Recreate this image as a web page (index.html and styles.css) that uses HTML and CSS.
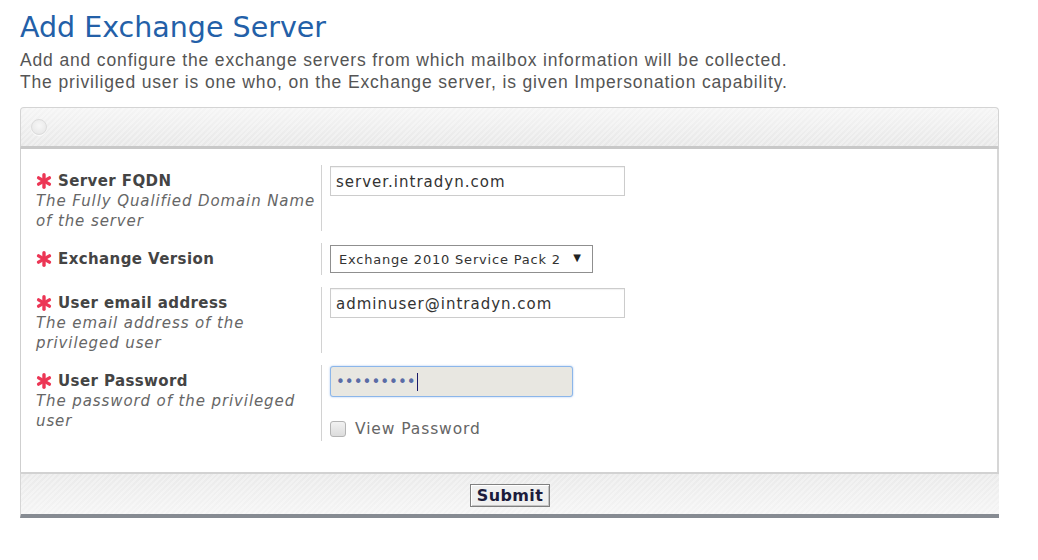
FILE: index.html
```html
<!DOCTYPE html>
<html>
<head>
<meta charset="utf-8">
<link rel="stylesheet" href="styles.css">
</head>
<body>
<div class="page">
  <h1 class="title">Add Exchange Server</h1>
  <p class="intro">Add and configure the exchange servers from which mailbox information will be collected.<br>The priviliged user is one who, on the Exchange server, is given Impersonation capability.</p>

  <div class="panel">
    <div class="panel-head"><span class="dot"></span></div>
    <div class="panel-body">
      <div class="row">
        <div class="label-cell">
          <div class="label"><svg class="req" viewBox="0 0 16 16"><g stroke="#ec3655" stroke-width="3.4" stroke-linecap="round"><line x1="8" y1="1.8" x2="8" y2="14.2"/><line x1="2.6" y1="4.9" x2="13.4" y2="11.1"/><line x1="2.6" y1="11.1" x2="13.4" y2="4.9"/></g></svg>Server FQDN</div>
          <div class="desc">The Fully Qualified Domain Name of the server</div>
        </div>
        <div class="field-cell">
          <input class="text" type="text" value="server.intradyn.com">
        </div>
      </div>

      <div class="row">
        <div class="label-cell">
          <div class="label"><svg class="req" viewBox="0 0 16 16"><g stroke="#ec3655" stroke-width="3.4" stroke-linecap="round"><line x1="8" y1="1.8" x2="8" y2="14.2"/><line x1="2.6" y1="4.9" x2="13.4" y2="11.1"/><line x1="2.6" y1="11.1" x2="13.4" y2="4.9"/></g></svg>Exchange Version</div>
        </div>
        <div class="field-cell">
          <span class="select-wrap">
            <select class="select"><option>Exchange 2010 Service Pack 2</option></select>
          </span>
        </div>
      </div>

      <div class="row">
        <div class="label-cell">
          <div class="label"><svg class="req" viewBox="0 0 16 16"><g stroke="#ec3655" stroke-width="3.4" stroke-linecap="round"><line x1="8" y1="1.8" x2="8" y2="14.2"/><line x1="2.6" y1="4.9" x2="13.4" y2="11.1"/><line x1="2.6" y1="11.1" x2="13.4" y2="4.9"/></g></svg>User email address</div>
          <div class="desc">The email address of the privileged user</div>
        </div>
        <div class="field-cell">
          <input class="text" type="text" value="adminuser@intradyn.com">
        </div>
      </div>

      <div class="row">
        <div class="label-cell">
          <div class="label"><svg class="req" viewBox="0 0 16 16"><g stroke="#ec3655" stroke-width="3.4" stroke-linecap="round"><line x1="8" y1="1.8" x2="8" y2="14.2"/><line x1="2.6" y1="4.9" x2="13.4" y2="11.1"/><line x1="2.6" y1="11.1" x2="13.4" y2="4.9"/></g></svg>User Password</div>
          <div class="desc">The password of the privileged user</div>
        </div>
        <div class="field-cell">
          <div class="password"><span class="dots">•••••••••</span><span class="caret"></span></div>
          <label class="check"><span class="box"></span>View Password</label>
        </div>
      </div>
    </div>
    <div class="panel-foot">
      <button class="submit" type="button">Submit</button>
    </div>
  </div>
</div>
</body>
</html>
```

FILE: styles.css
```css
html, body {
  margin: 0;
  padding: 0;
  background: #ffffff;
}

.page {
  padding: 10px 0 0 20px;
  width: 979px;
}

.title {
  margin: 0;
  font-family: "DejaVu Sans", Verdana, sans-serif;
  font-weight: normal;
  font-size: 28.5px;
  line-height: 36px;
  color: #2360a8;
}

.intro {
  margin: 3px 0 14px 0;
  font-family: "Liberation Sans", Arial, sans-serif;
  font-size: 17.5px;
  letter-spacing: 0.85px;
  line-height: 22px;
  color: #555555;
}

.panel {
  font-family: "DejaVu Sans", Verdana, sans-serif;
}

.panel-head {
  height: 38px;
  border: 1px solid #d4d4d4;
  border-bottom: 3px solid #c8c8c8;
  border-radius: 4px 4px 0 0;
  background:
    repeating-linear-gradient(135deg, rgba(255,255,255,0.3) 0 2px, rgba(255,255,255,0) 2px 4px),
    linear-gradient(#f5f5f5, #e8e8e8);
  display: flex;
  align-items: center;
  padding-left: 10px;
}

.dot {
  box-sizing: border-box;
  width: 16px;
  height: 16px;
  border-radius: 50%;
  border: 1px solid #dcdcdc;
  background: radial-gradient(circle at 50% 40%, #f7f7f7 0, #ececec 60%, #e2e2e2 100%);
  box-shadow: 0 1px 1px rgba(255,255,255,0.8);
}

.panel-body {
  border-left: 1px solid #cfcfcf;
  border-right: 2px solid #d6d6d6;
  padding: 16px 0 31px 15px;
  display: flex;
  flex-direction: column;
  gap: 12px;
}

.row {
  display: grid;
  grid-template-columns: 285px 1fr;
}

.label-cell {
  padding-top: 6px;
  line-height: 20px;
  font-size: 15px;
}

.label {
  font-weight: bold;
  letter-spacing: 0.4px;
  color: #444444;
  display: flex;
  align-items: center;
}

.req {
  width: 16px;
  height: 16px;
  margin: 0 6px 0 0;
  flex: none;
}

.desc {
  font-style: italic;
  letter-spacing: 0.9px;
  color: #666666;
}

.field-cell {
  border-left: 1px solid #d2d2d2;
  padding: 1px 0 2px 8px;
  display: flex;
  flex-direction: column;
  align-items: flex-start;
}

.text {
  box-sizing: border-box;
  width: 295px;
  height: 30px;
  margin: 0;
  padding: 1px 5px 0 5px;
  border: 1px solid #cccccc;
  box-shadow: inset 0 1px 1px rgba(0,0,0,0.06);
  font-family: "DejaVu Sans", Verdana, sans-serif;
  font-size: 15px;
  letter-spacing: 1px;
  color: #333333;
  background: #ffffff;
  outline: none;
}

.select-wrap {
  position: relative;
  display: inline-block;
  margin-top: 1px;
}

.select-wrap::after {
  content: "▼";
  position: absolute;
  right: 12px;
  top: 7px;
  font-size: 10px;
  color: #222222;
  pointer-events: none;
}

.select {
  box-sizing: border-box;
  appearance: none;
  -webkit-appearance: none;
  width: 263px;
  height: 28px;
  margin: 0;
  padding: 0 8px;
  border: 1px solid #8f8f8f;
  border-radius: 0;
  background: #ffffff;
  font-family: "DejaVu Sans", Verdana, sans-serif;
  font-size: 13px;
  letter-spacing: 0.8px;
  color: #333333;
}

.password {
  box-sizing: border-box;
  width: 243px;
  height: 31px;
  border: 1px solid #8bb6ea;
  border-radius: 3px;
  box-shadow: 0 0 2px rgba(90,150,230,0.6);
  background: #e8e7e1;
  display: flex;
  align-items: center;
  padding-left: 5px;
}

.dots {
  font-family: "DejaVu Sans", Verdana, sans-serif;
  font-size: 15px;
  color: #5a6ca6;
}

.caret {
  width: 1px;
  height: 18px;
  background: #1a1a6a;
  margin-left: 1px;
}

.check {
  display: flex;
  align-items: center;
  margin-top: 22px;
  font-size: 15.5px;
  letter-spacing: 0.9px;
  color: #666666;
  line-height: 20px;
}

.box {
  box-sizing: border-box;
  width: 16px;
  height: 16px;
  border: 1px solid #b4b4b4;
  border-radius: 3px;
  background: linear-gradient(#f2f2f2, #dcdcdc);
  margin-right: 9px;
}

.panel-foot {
  box-sizing: border-box;
  height: 46px;
  border-top: 2px solid #d2d2d2;
  border-left: 1px solid #d6d6d6;
  border-bottom: 4px solid #868b92;
  background:
    repeating-linear-gradient(135deg, rgba(255,255,255,0.3) 0 2px, rgba(255,255,255,0) 2px 4px),
    linear-gradient(#eaeaea, #f5f5f5);
  display: flex;
  justify-content: center;
  align-items: flex-start;
  padding-top: 10px;
}

.submit {
  height: 23px;
  padding: 0 6px;
  margin: 0;
  border: 1px solid #808080;
  box-shadow: inset 1px 1px 0 #ffffff, inset -1px -1px 0 #c4c4c4;
  background: #f0f0f0;
  font-family: "DejaVu Sans", Verdana, sans-serif;
  font-weight: bold;
  font-size: 16px;
  letter-spacing: 0.4px;
  line-height: 20px;
  color: #1c1c3c;
  border-radius: 0;
}
```
